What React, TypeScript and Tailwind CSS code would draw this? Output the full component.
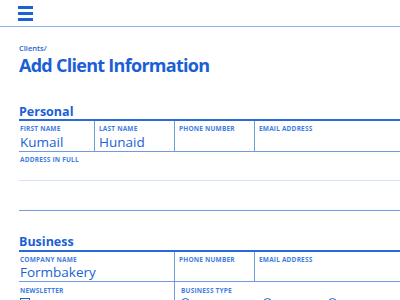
const font = { fontFamily: '"Open Sans", "Noto Sans", sans-serif' };

const labelCls = 'text-[6.5px] font-bold tracking-[0.03em] uppercase text-[#3f7ee0] leading-none';

function Field({ label, value, className = '' }: { label: string; value?: string; className?: string }) {
  return (
    <div className={`px-[1px] pt-[5px] h-full ${className}`}>
      <p className={labelCls}>{label}</p>
      {value && <p className="text-[13.5px] font-medium text-[#1a5fd6] leading-none mt-[3px]">{value}</p>}
    </div>
  );
}

function Radio({ className = '' }: { className?: string }) {
  return <span className={`w-[9px] h-[9px] rounded-full border border-[#1a5fd6] ${className}`} />;
}

export default function App() {
  return (
    <div className="w-[400px] h-[300px] overflow-hidden bg-white" style={font}>
      <header className="h-[27px] border-b-[1.5px] border-[#8db3ec] pl-[18px] pt-[6px]">
        <div className="w-[15px] flex flex-col gap-[3.5px]">
          <span className="h-[2.5px] bg-[#1a62dc]" />
          <span className="h-[2.5px] bg-[#1a62dc]" />
          <span className="h-[2.5px] bg-[#1a62dc]" />
        </div>
      </header>

      <div className="pl-[19px]">
        <p className="mt-[18px] text-[7.5px] font-semibold text-[#1a5fd6] leading-none">Clients/</p>
        <h1 className="mt-[3px] text-[18px] font-bold tracking-[-0.04em] text-[#1a5fd6] leading-none">Add Client Information</h1>

        <h2 className="mt-[32px] text-[12.5px] font-bold text-[#1a5fd6] leading-none">Personal</h2>
        <div className="mt-[1px] border-t-2 border-[#2a6ad8]">
          <div className="grid grid-cols-[76px_80px_80px_1fr] h-[31px] border-b border-[#6f9be3]">
            <Field label="First name" value="Kumail" className="border-r border-[#6f9be3]" />
            <Field label="Last name" value="Hunaid" className="border-r border-[#6f9be3] pl-[4px]" />
            <Field label="Phone number" className="border-r border-[#6f9be3] pl-[4px]" />
            <Field label="Email address" className="pl-[4px]" />
          </div>
          <div className="h-[59px] border-b border-[#6f9be3]">
            <div className="h-[29px] border-b border-[#d3e2f8]">
              <Field label="Address in full" />
            </div>
          </div>
        </div>

        <h2 className="mt-[25px] text-[12.5px] font-bold text-[#1a5fd6] leading-none">Business</h2>
        <div className="mt-[1px] border-t-2 border-[#2a6ad8]">
          <div className="grid grid-cols-[156px_80px_1fr] h-[30px] border-b border-[#6f9be3]">
            <Field label="Company name" value="Formbakery" className="border-r border-[#6f9be3]" />
            <Field label="Phone number" className="border-r border-[#6f9be3] pl-[4px]" />
            <Field label="Email address" className="pl-[4px]" />
          </div>
          <div className="grid grid-cols-[156px_1fr] h-[40px]">
            <div className="border-r border-[#6f9be3] pt-[6px] px-[1px]">
              <p className={labelCls}>Newsletter</p>
              <span className="mt-[4px] block w-[10px] h-[10px] border border-[#1a5fd6]" />
            </div>
            <div className="pl-[6px] pt-[6px]">
              <p className={labelCls}>Business type</p>
              <div className="mt-[4px] flex">
                <Radio />
                <Radio className="ml-[73px]" />
                <Radio className="ml-[56px]" />
              </div>
            </div>
          </div>
        </div>
      </div>
    </div>
  );
}
